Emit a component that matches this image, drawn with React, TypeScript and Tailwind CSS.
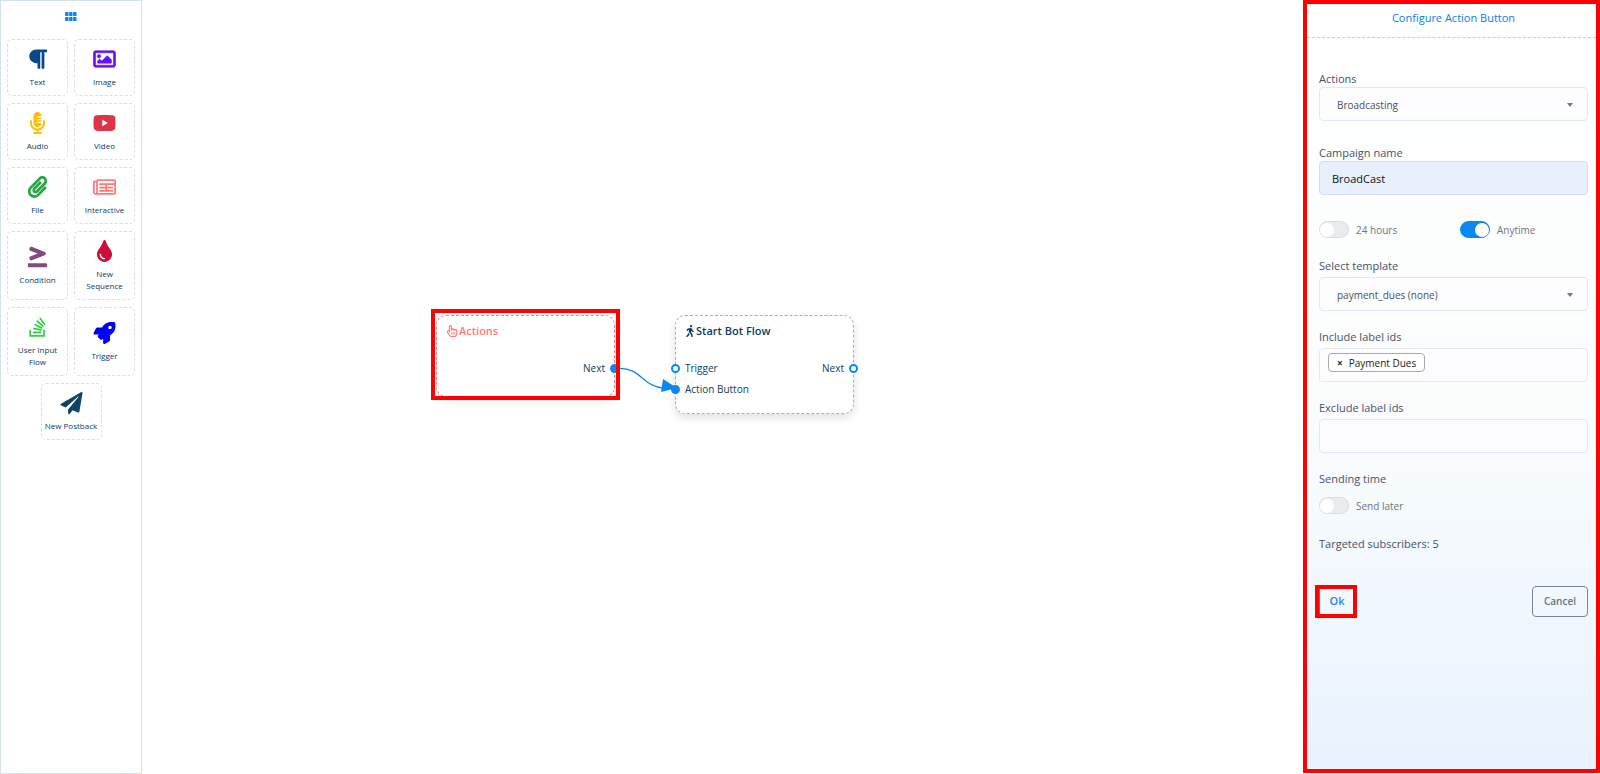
import type { ReactNode } from "react";
import {
  FaGreaterThanEqual,
  FaMicrophoneAlt,
  FaPaperclip,
  FaPaperPlane,
  FaParagraph,
  FaRegHandPointer,
  FaRegImage,
  FaRocket,
  FaStackOverflow,
  FaTint,
  FaWalking,
} from "react-icons/fa";

type IconProps = { className?: string };
type Tool = { label: string; icon: (props: IconProps) => ReactNode; color: string };

function VideoIcon({ className }: IconProps) {
  return (
    <svg viewBox="0 0 24 22" className={className} fill="currentColor">
      <path
        fillRule="evenodd"
        d="M4 3C8 2.5 16 2.5 20 3Q23 3.2 23.3 6Q23.7 11 23.3 16Q23 18.8 20 19C16 19.5 8 19.5 4 19Q1 18.8 .7 16Q.3 11 .7 6Q1 3.2 4 3ZM9.7 7.6V14.400L15.600 11Z"
      />
    </svg>
  );
}

function NewsIcon({ className }: IconProps) {
  return (
    <svg viewBox="0 0 24 22" className={className} fill="none" stroke="currentColor" strokeWidth="1.8">
      <path d="M4.200 3.800H22.200Q23.100 3.800 23.100 4.700V17.300Q23.100 18.200 22.200 18.200H2.600Q.9 18.200 .9 16.400V5.300H4.200M4.200 3.800V16.400Q4.200 18.200 2.500 18.200" />
      <path d="M6.500 8.100H23M6.500 11.700H21M6.500 15.100H21M13.700 8.100V15.100" />
    </svg>
  );
}

const toolRows: Tool[][] = [
  [
    { label: "Text", icon: FaParagraph, color: "text-[#084887]" },
    { label: "Image", icon: FaRegImage, color: "text-[#6610f2] stroke-[#6610f2] [stroke-width:14px]" },
  ],
  [
    { label: "Audio", icon: FaMicrophoneAlt, color: "text-[#ffc107]" },
    { label: "Video", icon: VideoIcon, color: "text-[#dc3545]" },
  ],
  [
    { label: "File", icon: FaPaperclip, color: "text-[#28a745]" },
    { label: "Interactive", icon: NewsIcon, color: "text-[#ff7979]" },
  ],
  [
    { label: "Condition", icon: FaGreaterThanEqual, color: "text-[#834b7b]" },
    { label: "New Sequence", icon: FaTint, color: "text-[#ce0f3a]" },
  ],
  [
    { label: "User Input Flow", icon: FaStackOverflow, color: "text-[#2bd63c]" },
    { label: "Trigger", icon: FaRocket, color: "text-[#0000ff]" },
  ],
  [{ label: "New Postback", icon: FaPaperPlane, color: "text-[#0d4468]" }],
];

function ToolTile({ tool, tall }: { tool: Tool; tall: boolean }) {
  const Icon = tool.icon;
  return (
    <button
      type="button"
      className={`flex w-[61px] flex-col items-center justify-center gap-[6px] rounded-[5px] border border-dashed border-[#cfdfee] pt-px text-[8px] leading-3 text-[#0d3c61] ${
        tall ? "h-[69px] px-1" : "h-[57px]"
      }`}
    >
      <Icon className={`h-[22px] w-[23px] ${tool.color}`} />
      <span>{tool.label}</span>
    </button>
  );
}

function Sidebar() {
  return (
    <aside className="flex w-[142px] shrink-0 flex-col items-center border border-[#d3e2f1] bg-white pt-[10px]">
      <button type="button" aria-label="Toggle blocks" className="mb-[18px]">
        <svg viewBox="0 0 12 9" className="mt-px h-[9px] w-3 fill-[#0c86f0]">
          {[0, 4, 8].map((x) => (
            <g key={x}>
              <rect x={x + 0.1} y="0" width="3.400" height="4" rx="0.600" />
              <rect x={x + 0.1} y="5" width="3.400" height="4" rx="0.600" />
            </g>
          ))}
        </svg>
      </button>
      <div className="flex flex-col gap-[7px]">
        {toolRows.map((row, i) => (
          <div key={i} className="flex justify-center gap-[6px]">
            {row.map((tool) => (
              <ToolTile key={tool.label} tool={tool} tall={i === 3 || i === 4} />
            ))}
          </div>
        ))}
      </div>
    </aside>
  );
}

function Socket({ filled, side }: { filled?: boolean; side: "left" | "right" }) {
  return (
    <span
      className={`absolute top-[6px] size-[9px] rounded-full border-2 border-[#0c86f0] ${
        filled ? "bg-[#0c86f0]" : "bg-white"
      } ${side === "left" ? "-left-[5px]" : "-right-[5px]"}`}
    />
  );
}

function Canvas() {
  return (
    <main className="relative min-w-0 flex-1 bg-white text-[10px] leading-[21px] text-[#0d3c61]">
      <section className="absolute left-[294px] top-[315px] h-[82px] w-[179px] rounded-[10px] border border-dashed border-[#ff7979] bg-white pt-1 shadow-[0_5px_10px_rgba(0,0,0,0.08)]">
        <h2 className="flex items-center gap-px px-[9px] text-[11px] font-semibold text-[#ff7979]">
          <FaRegHandPointer className="size-3" />
          Actions
        </h2>
        <div className="relative mt-[17px] pr-[9px] text-right">
          Next
          <Socket filled side="right" />
        </div>
      </section>

      <section className="absolute left-[533px] top-[315px] h-[99px] w-[179px] rounded-[10px] border border-dashed border-[#a3b1bc] bg-white pt-1 shadow-[0_4px_8px_rgba(0,0,0,0.12)]">
        <h2 className="flex items-center px-2 text-[11px] font-semibold">
          <FaWalking className="size-3" />
          Start Bot Flow
        </h2>
        <div className="relative mt-[17px] flex justify-between px-[9px]">
          <Socket side="left" />
          <span>Trigger</span>
          <span>Next</span>
          <Socket side="right" />
        </div>
        <div className="relative px-[9px]">
          <Socket filled side="left" />
          Action Button
        </div>
      </section>

      <div className="absolute left-[289px] top-[309px] h-[91px] w-[189px] border-4 border-[#ff0000]" />

      <svg viewBox="0 0 60 34" className="absolute left-[478px] top-[362px] h-[34px] w-[60px]">
        <path d="M0 6.300 C22 6.300 22 26 48 26.500" fill="none" stroke="#0c86f0" strokeWidth="1.300" />
        <path d="M43 17 L57 26 L41 30 Z" fill="#0c86f0" />
      </svg>
    </main>
  );
}

const box = "h-[34px] w-full rounded border border-[#e4e6fc] bg-[#fdfdff]";

function Field({ label, id, children }: { label: string; id: string; children: ReactNode }) {
  return (
    <div className="flex flex-col">
      <label htmlFor={id} className="text-[11px] leading-4 text-[#4a5068]">
        {label}
      </label>
      {children}
    </div>
  );
}

function SelectBox({ id, value }: { id: string; value: string }) {
  return (
    <div className="relative">
      <select
        id={id}
        defaultValue={value}
        className={`${box} block appearance-none px-[17px] pt-[3px] text-[10px] text-[#495057]`}
      >
        <option>{value}</option>
      </select>
      <svg viewBox="0 0 6 4" className="pointer-events-none absolute right-[15px] top-4 h-1 w-[6px] fill-[#777]">
        <path d="M0 0h6L3 4z" />
      </svg>
    </div>
  );
}

function Toggle({ label, on }: { label: string; on?: boolean }) {
  return (
    <label className="flex w-[141px] shrink-0 items-center gap-[7px] text-[10px] leading-4 text-[#6c757d]">
      <input type="checkbox" defaultChecked={on} className="peer sr-only" />
      <span className="flex h-[17px] w-[30px] items-center rounded-full border border-[#d8dbe0] bg-[#e9ecef] peer-checked:justify-end peer-checked:border-[#0c86f0] peer-checked:bg-[#0c86f0]">
        <span className="size-[14px] rounded-full bg-white" />
      </span>
      {label}
    </label>
  );
}

function ConfigPanel() {
  return (
    <aside className="mb-px w-[297px] shrink-0 border-4 border-[#ff0000] bg-linear-to-b from-white via-[#fbfdfc] via-50% to-[#e8f3ff]">
      <h1 className="border-b border-dashed border-[#a5d5fb] pb-[9px] pl-1 pt-1 text-center text-[11px] leading-5 text-[#0c7cf0]">
        Configure Action Button
      </h1>
      <form className="pl-3 pr-2 pt-[33px]" onSubmit={(e) => e.preventDefault()}>
        <Field label="Actions" id="actions">
          <SelectBox id="actions" value="Broadcasting" />
        </Field>
        <div className="mt-6">
          <Field label="Campaign name" id="campaign">
            <input
              id="campaign"
              defaultValue="BroadCast"
              className="h-[34px] w-full rounded border border-[#cfdff0] bg-[#e8f0fe] px-3 text-[11px] text-[#111]"
            />
          </Field>
        </div>
        <div className="mb-5 mt-[26px] flex">
          <Toggle label="24 hours" />
          <Toggle label="Anytime" on />
        </div>
        <div className="flex flex-col gap-[18px] *:gap-[3px]">
          <Field label="Select template" id="template">
            <SelectBox id="template" value="payment_dues (none)" />
          </Field>
          <Field label="Include label ids" id="include">
            <div id="include" className={`${box} flex items-start px-2 pt-1`}>
              <span className="inline-flex h-[19px] items-center gap-[6px] rounded border border-[#aaa] bg-white px-2 text-[10px] leading-4 text-[#222]">
                <button type="button" aria-label="Remove Payment Dues" className="font-bold">
                  ×
                </button>
                Payment Dues
              </span>
            </div>
          </Field>
          <Field label="Exclude label ids" id="exclude">
            <input id="exclude" className={`${box} px-3 text-[10px]`} />
          </Field>
        </div>
        <p className="mt-[18px] text-[11px] leading-4 text-[#4a5068]">Sending time</p>
        <div className="mt-[10px] flex">
          <Toggle label="Send later" />
        </div>
        <p className="mt-[22px] text-[11px] leading-4 text-[#4a5068]">Targeted subscribers: 5</p>
        <div className="mt-[33px] flex items-center justify-between">
          <button
            type="submit"
            className="-ml-1 h-[33px] w-[42px] border-4 border-[#ff0000] pl-[2px] text-[11px] font-semibold text-[#2f80ed] shadow-[inset_1px_0_0_#0c86f0]"
          >
            Ok
          </button>
          <button
            type="button"
            className="h-[31px] w-14 rounded border border-[#7d868e] text-[10px] font-semibold text-[#6c757d]"
          >
            Cancel
          </button>
        </div>
      </form>
    </aside>
  );
}

export default function App() {
  return (
    <div className="flex min-h-screen bg-white font-['Open_Sans','Noto_Sans',sans-serif]">
      <Sidebar />
      <Canvas />
      <ConfigPanel />
    </div>
  );
}
